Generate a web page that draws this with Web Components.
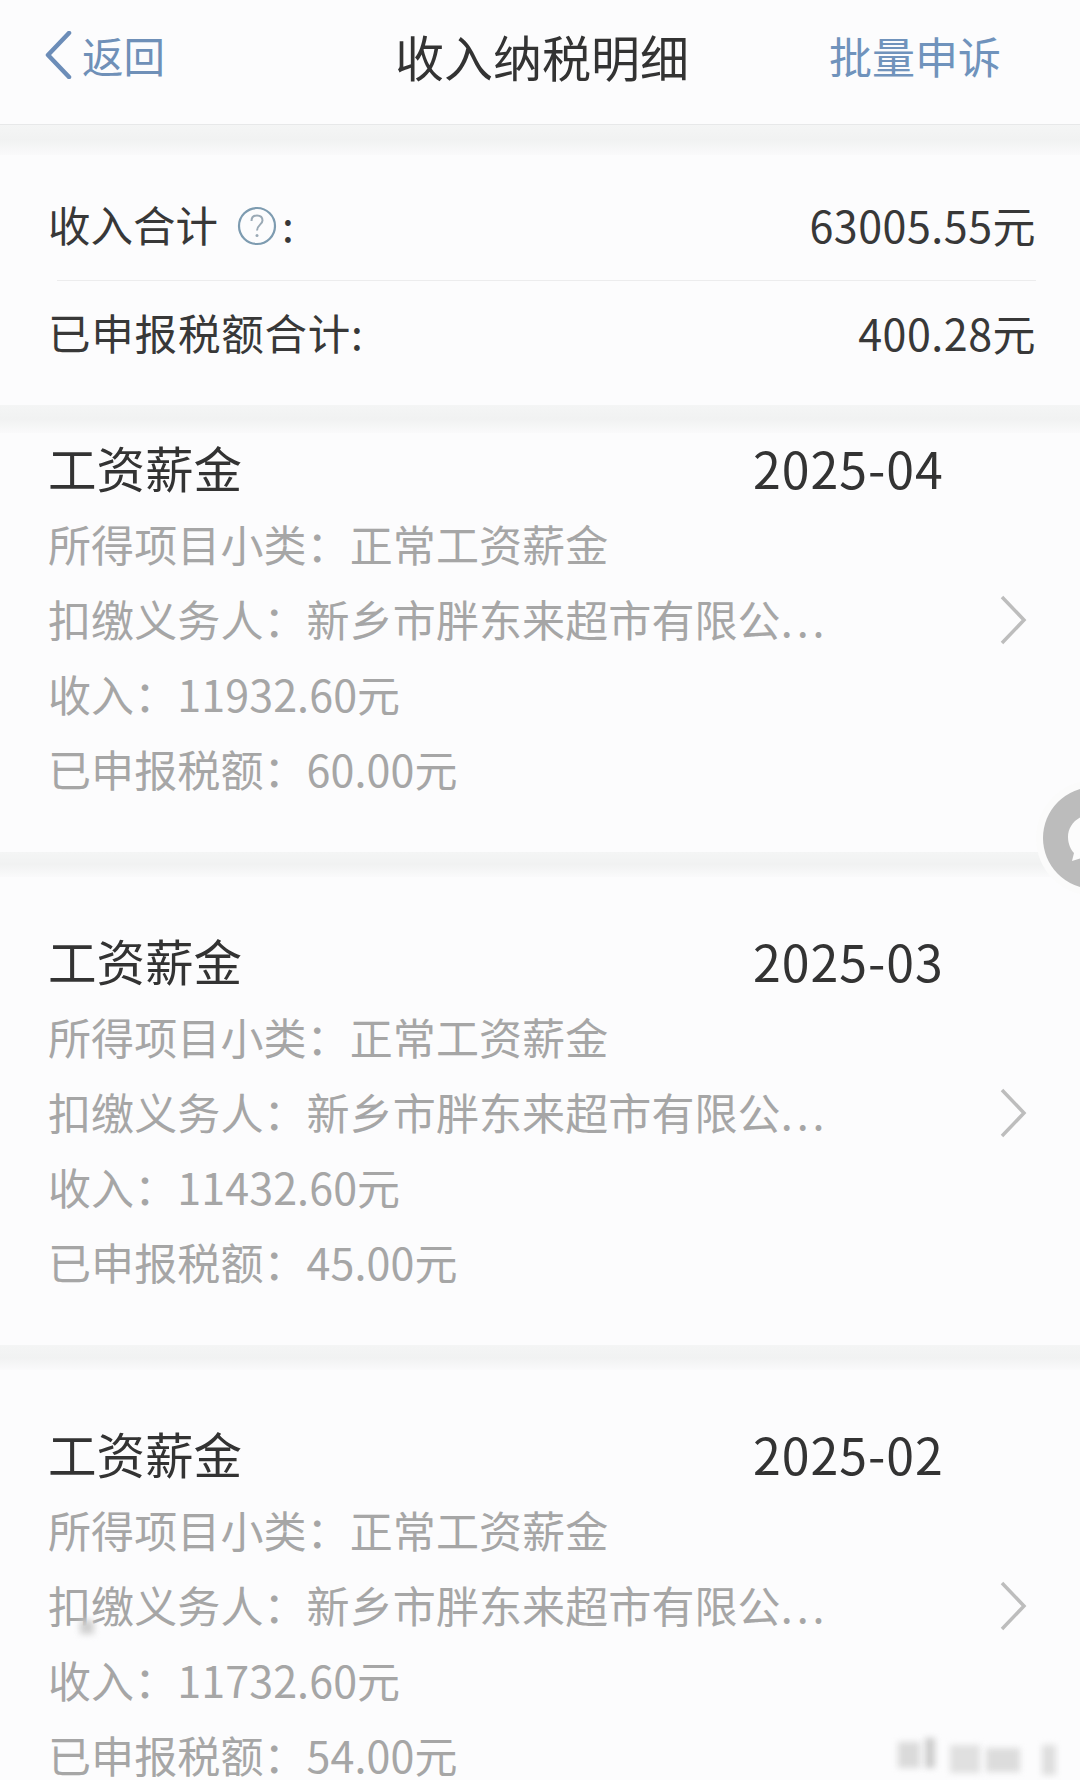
<!DOCTYPE html>
<html lang="zh">
<head>
<meta charset="utf-8">
<title>收入纳税明细</title>
<style>
    html, body { margin: 0; height: 1780px; overflow: hidden; background: #fcfcfd; }
    body { font-family: "Noto Sans CJK SC", "Noto Sans", sans-serif; color: #353535; }
    #page { position: relative; height: 1780px; overflow: hidden; }
</style>
</head>
<body>
<div id="page">
    <tax-nav title-text="收入纳税明细" back="返回" action="批量申诉"></tax-nav>
    <section-gap size="30"></section-gap>
    <tax-summary>
        <summary-row amount="63005.55元" divided>收入合计<help-icon></help-icon>:</summary-row>
        <summary-row amount="400.28元" style="letter-spacing: 0.8px">已申报税额合计:</summary-row>
    </tax-summary>
    <section-gap size="28"></section-gap>
    <income-card month="2025-04" income="11932.60元" tax="60.00元" clipped></income-card>
    <section-gap size="25"></section-gap>
    <income-card month="2025-03" income="11432.60元" tax="45.00元"></income-card>
    <section-gap size="25"></section-gap>
    <income-card month="2025-02" income="11732.60元" tax="54.00元"></income-card>
    <chat-bubble></chat-bubble>
    <blur-mark></blur-mark>
</div>

<script>
class TaxNav extends HTMLElement {
    constructor() {
        super();
        this.attachShadow({ mode: "open" });
    }
    connectedCallback() {
        this.shadowRoot.innerHTML = `<style>
            :host { display: grid; grid-template-columns: 1fr auto 1fr; height: 125px; padding-bottom: 14px; box-sizing: border-box; align-items: center; background: #fcfcfd; border-bottom: 1px solid #e7e8e9; }
            .back { display: flex; align-items: center; gap: 10px; padding-left: 44px; color: #6f90b8; font-size: 41.5px; }
            .back svg { width: 28px; height: 48px; }
            h1 { margin: 0 0 0 4px; font-size: 49px; font-weight: 400; color: #333; line-height: 1; }
            .action { justify-self: end; padding-right: 79px; color: #7093bc; font-size: 43px; }
        </style>
        <div class="back">
            <svg viewBox="0 0 28 48"><path d="M25 2 L4 24 L25 46" fill="none" stroke="#6c8db8" stroke-width="4.5" stroke-linecap="round" stroke-linejoin="round"/></svg>
            <span>${this.getAttribute("back")}</span>
        </div>
        <h1>${this.getAttribute("title-text")}</h1>
        <div class="action">${this.getAttribute("action")}</div>`;
    }
}

class SectionGap extends HTMLElement {
    constructor() {
        super();
        this.attachShadow({ mode: "open" });
    }
    connectedCallback() {
        this.shadowRoot.innerHTML = `<style>
            :host { display: block; height: ${this.getAttribute("size")}px; background: linear-gradient(#f4f5f5, #f1f2f2 50%, #fafafb); }
        </style>`;
    }
}

class TaxSummary extends HTMLElement {
    constructor() {
        super();
        this.attachShadow({ mode: "open" });
    }
    connectedCallback() {
        this.shadowRoot.innerHTML = `<style>
            :host { display: block; padding: 17px 44px 17px 48px; background: #fcfcfd; }
        </style>
        <slot></slot>`;
    }
}

class SummaryRow extends HTMLElement {
    constructor() {
        super();
        this.attachShadow({ mode: "open" });
    }
    connectedCallback() {
        const divided = this.hasAttribute("divided");
        this.shadowRoot.innerHTML = `<style>
            :host { display: flex; justify-content: space-between; align-items: center; height: 108px; padding-bottom: 5px; box-sizing: border-box; font-size: 42.5px; color: #383838; }
            .divider { position: absolute; left: 57px; right: 44px; top: 280px; height: 1px; background: #ececed; }
            .label { display: flex; align-items: center; }
            .amount { letter-spacing: 0.5px; font-size: 43px; }
        </style>
        <span class="label"><slot></slot></span>
        <span class="amount">${this.getAttribute("amount")}</span>
        ${divided ? '<div class="divider"></div>' : ""}`;
    }
}

class HelpIcon extends HTMLElement {
    constructor() {
        super();
        this.attachShadow({ mode: "open" });
    }
    connectedCallback() {
        this.shadowRoot.innerHTML = `<style>
            :host { display: inline-flex; width: 40px; height: 40px; margin: 5px 5px 0 19px; }
        </style>
        <svg viewBox="0 0 40 40" width="40" height="40">
            <circle cx="20" cy="20" r="18" fill="none" stroke="#7d9bb0" stroke-width="2.2"/>
            <path d="M14.5 15 C14.5 11 17 9.5 20 9.5 C23.5 9.5 25.5 11.5 25.5 14.5 C25.5 18.5 20 19 20 24.5" fill="none" stroke="#9aa9b5" stroke-width="2"/>
            <circle cx="20" cy="29.5" r="1.5" fill="#9aa9b5"/>
        </svg>`;
    }
}

class IncomeCard extends HTMLElement {
    constructor() {
        super();
        this.attachShadow({ mode: "open" });
    }
    connectedCallback() {
        const clipped = this.hasAttribute("clipped");
        this.shadowRoot.innerHTML = `<style>
            :host { display: block; position: relative; padding: ${clipped ? 0 : 49}px 0 58px 48px; background: #fcfcfd; }
            .head { display: flex; align-items: center; height: 75px; padding-bottom: 8px; box-sizing: border-box; font-size: 48.5px; color: #333; }
            .head span:first-child { width: 705px; }
            .head span:last-child { font-size: 50px; letter-spacing: 1px; }
            .row { display: flex; align-items: center; height: 75px; padding-bottom: 4px; box-sizing: border-box; font-size: 43px; line-height: 1.05; letter-spacing: 0.1px; color: #a6a6a6; white-space: pre; }
            .row.last { height: 61px; align-items: flex-start; padding: 13px 0 0; }
            .more { position: relative; }
            .dots { letter-spacing: 4px; }
            svg { position: absolute; left: 951px; top: 12px; width: 28px; height: 50px; }
        </style>
        <div class="head"><span>工资薪金</span><span>${this.getAttribute("month")}</span></div>
        <div class="row">所得项目小类：正常工资薪金</div>
        <div class="row more"><span>扣缴义务人：新乡市胖东来超市有限公<span class="dots">...</span></span><svg viewBox="0 0 28 50"><path d="M3 2 L25 25 L3 48" fill="none" stroke="#bdbdbd" stroke-width="3.5"/></svg></div>
        <div class="row">收入：${this.getAttribute("income")}</div>
        <div class="row last">已申报税额：${this.getAttribute("tax")}</div>`;
    }
}

class ChatBubble extends HTMLElement {
    constructor() {
        super();
        this.attachShadow({ mode: "open" });
    }
    connectedCallback() {
        this.shadowRoot.innerHTML = `<style>
            :host { position: absolute; left: 1036px; top: 780px; width: 44px; height: 116px; }
            svg { display: block; }
        </style>
        <svg viewBox="0 0 44 116" width="44" height="116">
            <circle cx="58" cy="58" r="58" fill="#fbfbfb"/>
            <circle cx="58" cy="58" r="51" fill="#bcbcbc"/>
            <path d="M58 34 C43 34 32 44 32 57 C32 64 35 70 38 73 L36 81 L46 78 C50 80 54 81 58 81 Z" fill="#fcfcfc"/>
        </svg>`;
    }
}

class BlurMark extends HTMLElement {
    constructor() {
        super();
        this.attachShadow({ mode: "open" });
    }
    connectedCallback() {
        this.shadowRoot.innerHTML = `<style>
            :host { position: absolute; left: 0; top: 0; width: 1080px; height: 1780px; pointer-events: none; overflow: hidden; }
            i { position: absolute; filter: blur(3px); }
        </style>
        <i style="left:80px;top:1620px;width:14px;height:14px;background:#cfcfcf"></i>
        <i style="left:898px;top:1742px;width:22px;height:26px;background:#dadada"></i>
        <i style="left:925px;top:1738px;width:10px;height:30px;background:#cccccc"></i>
        <i style="left:950px;top:1745px;width:30px;height:28px;background:#e0e0e0"></i>
        <i style="left:986px;top:1748px;width:34px;height:24px;background:#dcdcdc"></i>
        <i style="left:1042px;top:1745px;width:14px;height:30px;background:#dedede"></i>`;
    }
}

customElements.define("tax-nav", TaxNav);
customElements.define("section-gap", SectionGap);
customElements.define("tax-summary", TaxSummary);
customElements.define("summary-row", SummaryRow);
customElements.define("help-icon", HelpIcon);
customElements.define("income-card", IncomeCard);
customElements.define("chat-bubble", ChatBubble);
customElements.define("blur-mark", BlurMark);
</script>
</body>
</html>
